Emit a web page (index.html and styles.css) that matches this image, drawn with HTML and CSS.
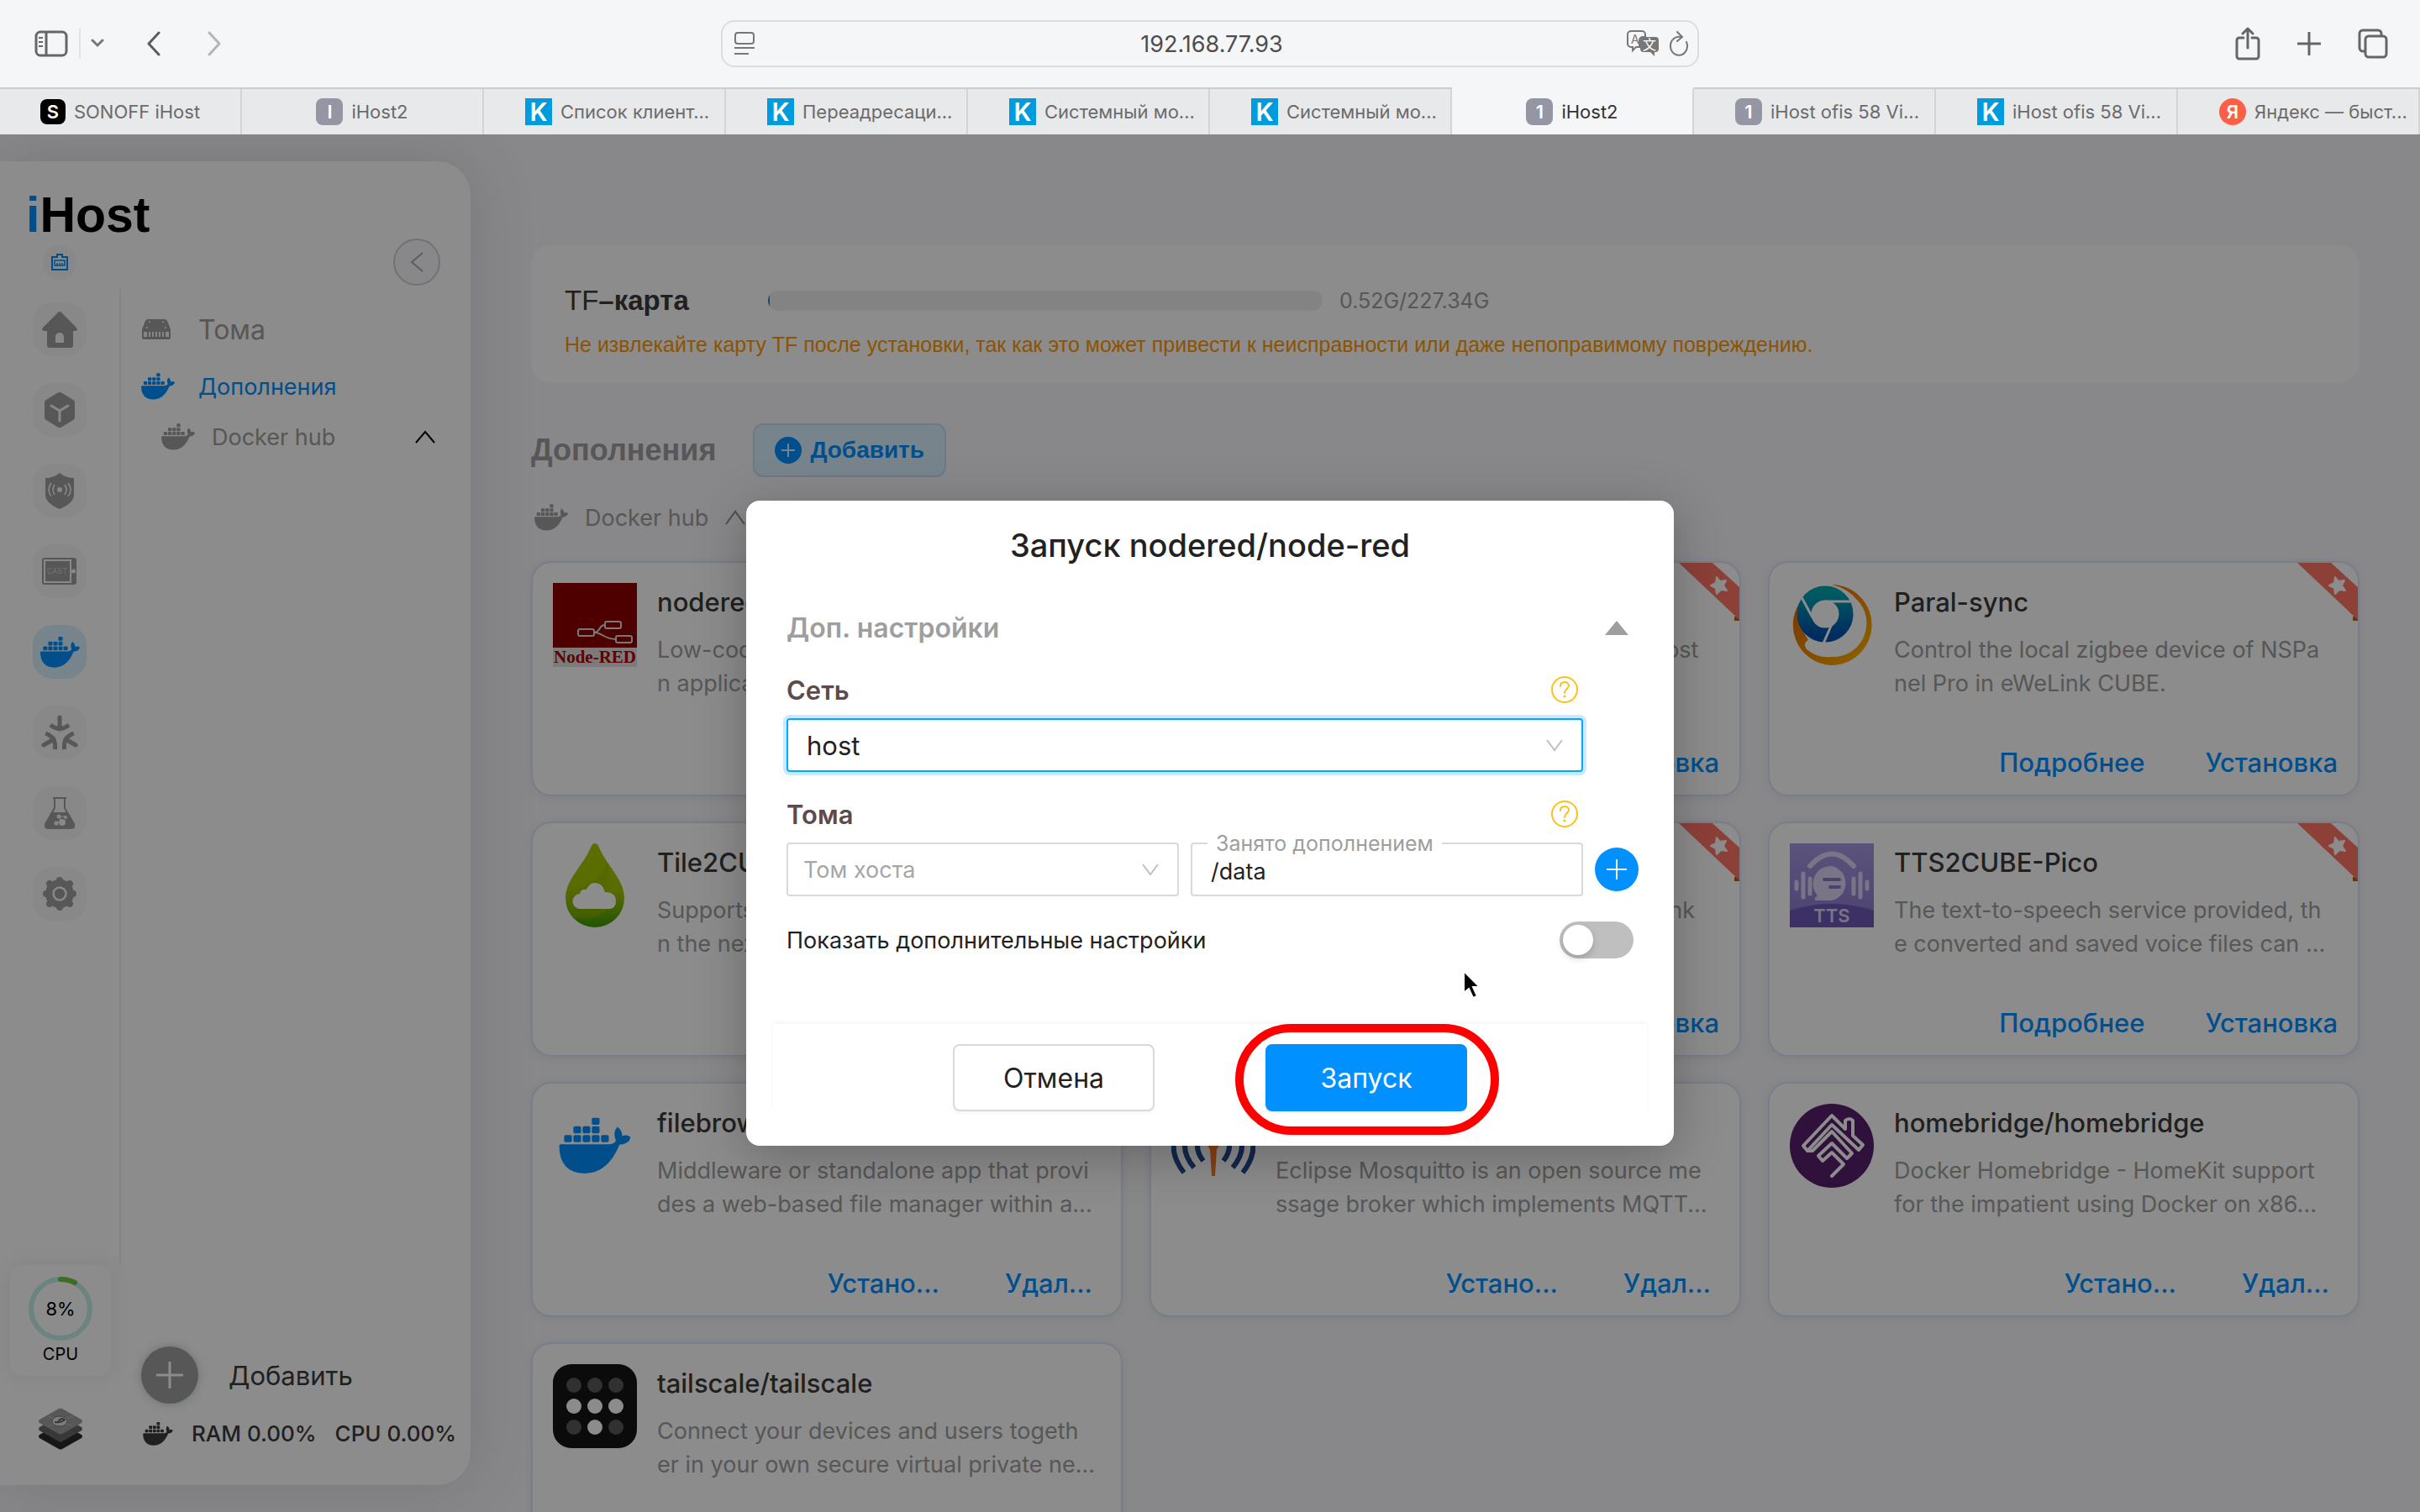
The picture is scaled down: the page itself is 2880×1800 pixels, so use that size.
FILE: index.html
```html
<!DOCTYPE html>
<html lang="ru">
<head>
    <meta charset="UTF-8">
    <meta name="viewport" content="width=device-width, initial-scale=1.0">
    <title>iHost2</title>
    <link rel="stylesheet" href="styles.css">
</head>
<body>
    <svg class="sprite" aria-hidden="true">
        <symbol id="docker" viewBox="0 0 140 110">
            <path d="M0 56Q0 52 4 52H98Q108 51 111 45Q104 28 114 18Q124 26 123 36Q132 32 140 38Q136 52 118 53Q95 109 50 109Q2 109 0 56Z"/>
            <rect x="10" y="34" width="15" height="14" rx="3"/>
            <rect x="28" y="34" width="15" height="14" rx="3"/>
            <rect x="46" y="34" width="15" height="14" rx="3"/>
            <rect x="64" y="34" width="15" height="14" rx="3"/>
            <rect x="82" y="34" width="15" height="14" rx="3"/>
            <rect x="28" y="17" width="15" height="14" rx="3"/>
            <rect x="46" y="17" width="15" height="14" rx="3"/>
            <rect x="64" y="17" width="15" height="14" rx="3"/>
            <rect x="64" y="0" width="15" height="14" rx="3"/>
        </symbol>
        <symbol id="ribbon" viewBox="0 0 72 70">
            <path d="M66 64h6v5h-6z" fill="#a86a10"/>
            <path d="M0 0H40L72 29V68Z" fill="#ff7566"/>
            <path d="M45 17l4 5 7-1-3 6 4 6-7-1-5 5-1-7-6-3 6-3z" fill="#fff" stroke="#fff" stroke-width="2" stroke-linejoin="round"/>
        </symbol>
        <symbol id="help" viewBox="0 0 32 32">
            <g fill="none" stroke="#fbc01a" stroke-width="2">
                <circle cx="16" cy="16" r="15"/>
                <path d="M11 12c0-7 10-6 10-1 0 4-5 4-5 9" stroke-linecap="round"/>
            </g>
            <circle cx="16" cy="24" r="1.6" fill="#fbc01a"/>
        </symbol>
    </svg>

    <header class="toolbar">
        <div class="tool_group">
            <button class="tool" aria-label="Боковое меню"><svg width="40" height="32" viewBox="0 0 40 32" fill="none" stroke="#666" stroke-width="3"><rect x="2" y="2" width="36" height="28" rx="5"/><path d="M14 2v28"/><path d="M5 9h5M5 14h5M5 19h5" stroke-width="2"/></svg></button>
            <span class="tool_line"></span>
            <button class="tool tool_arrow" aria-label="Группы вкладок"><svg width="16" height="12" viewBox="0 0 16 12" fill="none" stroke="#777" stroke-width="3" stroke-linecap="round"><path d="M2 2l6 6 6-6"/></svg></button>
            <button class="tool tool_back" aria-label="Назад"><svg width="18" height="30" viewBox="0 0 18 30" fill="none" stroke="#5c5c5c" stroke-width="3" stroke-linecap="round" stroke-linejoin="round"><path d="M15 2L3 15l12 13"/></svg></button>
            <button class="tool tool_forward" aria-label="Вперёд"><svg width="18" height="30" viewBox="0 0 18 30" fill="none" stroke="#b4b5b7" stroke-width="3" stroke-linecap="round" stroke-linejoin="round"><path d="M3 2l12 13L3 28"/></svg></button>
        </div>
        <div class="address">
            <svg width="24" height="30" viewBox="0 0 24 30" fill="none" stroke="#777" stroke-width="2"><rect x="1" y="2" width="22" height="13" rx="3"/><path d="M0 20h24M0 27h17"/></svg>
            <input type="text" class="address_input" value="192.168.77.93" aria-label="Адрес">
            <svg width="38" height="32" viewBox="0 0 38 32"><path d="M5 1h13a4 4 0 0 1 4 4v3h-3a4 4 0 0 0-4 4v8h-4l-4 4v-4H5a4 4 0 0 1-4-4V5a4 4 0 0 1 4-4z" fill="none" stroke="#777" stroke-width="2"/><text x="5" y="16" font-size="14" fill="#777">A</text><path d="M20 8h14a4 4 0 0 1 4 4v10a4 4 0 0 1-4 4h-1v5l-5-5h-8a4 4 0 0 1-4-4V12a4 4 0 0 1 4-4z" fill="#777"/><text x="19" y="23" font-size="16" fill="#fff">文</text></svg>
            <button class="tool tool_reload" aria-label="Обновить"><svg width="24" height="30" viewBox="0 0 24 30" fill="none" stroke="#777" stroke-width="2" stroke-linecap="round"><path d="M21 13a10 11 0 1 1-7-6"/><path d="M10 1l6 6-6 5"/></svg></button>
        </div>
        <div class="tool_group tool_group_right">
            <button class="tool" aria-label="Поделиться"><svg width="30" height="40" viewBox="0 0 30 40" fill="none" stroke="#666" stroke-width="3" stroke-linecap="round" stroke-linejoin="round"><path d="M10 13H5a3 3 0 0 0-3 3v19a3 3 0 0 0 3 3h20a3 3 0 0 0 3-3V16a3 3 0 0 0-3-3h-5M15 25V3M9 8l6-6 6 6"/></svg></button>
            <button class="tool" aria-label="Новая вкладка"><svg width="28" height="28" viewBox="0 0 28 28" stroke="#666" stroke-width="3" stroke-linecap="round"><path d="M14 1v26M1 14h26"/></svg></button>
            <button class="tool" aria-label="Все вкладки"><svg width="36" height="36" viewBox="0 0 36 36" fill="none" stroke="#666" stroke-width="3"><path d="M9 27H6a4 4 0 0 1-4-4V6a4 4 0 0 1 4-4h18a4 4 0 0 1 4 4v3"/><rect x="9" y="9" width="25" height="25" rx="4"/></svg></button>
        </div>
    </header>

    <nav class="tabs">
        <a href="#" class="tab"><span class="fav fav_sonoff">S</span>SONOFF iHost</a>
        <a href="#" class="tab"><span class="fav fav_gray">I</span>iHost2</a>
        <a href="#" class="tab tab_long"><span class="fav fav_k">K</span>Список клиент...</a>
        <a href="#" class="tab tab_long"><span class="fav fav_k">K</span>Переадресаци...</a>
        <a href="#" class="tab tab_long"><span class="fav fav_k">K</span>Системный мо...</a>
        <a href="#" class="tab tab_long"><span class="fav fav_k">K</span>Системный мо...</a>
        <a href="#" class="tab active"><span class="fav fav_gray">1</span>iHost2</a>
        <a href="#" class="tab tab_long"><span class="fav fav_gray">1</span>iHost ofis 58 Vi...</a>
        <a href="#" class="tab tab_long"><span class="fav fav_k">K</span>iHost ofis 58 Vi...</a>
        <a href="#" class="tab tab_long"><span class="fav fav_ya">Я</span>Яндекс — быст...</a>
    </nav>

    <div class="page">
        <aside class="sidebar">
            <div class="sidebar_top">
                <div class="logo"><span>i</span>Host</div>
                <div class="sidebar_tools">
                    <span class="lan"><svg width="20" height="20" viewBox="0 0 20 20" fill="none" stroke="#0090ff" stroke-width="2"><path d="M1 4h6V1h6v3h6v15H1z"/><path d="M4 8h12v6H4zM7 11v3M10 11v3M13 11v3" stroke-width="1.5"/></svg></span>
                    <button class="collapse" aria-label="Свернуть"><svg width="16" height="24" viewBox="0 0 16 24" fill="none" stroke="#a9a9a9" stroke-width="2"><path d="M15 1L2 12l13 11"/></svg></button>
                </div>
            </div>
            <div class="sidebar_body">
                <div class="rail">
                    <nav class="rail_nav">
                        <a href="#" class="rail_item" aria-label="Главная"><svg width="44" height="44" viewBox="0 0 44 44"><path d="M20 2q2-2 4 0l18 18q2 3-1 4h-3v17q0 3-3 3H10q-3 0-3-3V24H3q-3-1-1-4z"/><path d="M17 38V31a5 5 0 0 1 10 0v7z" fill="#f7f7f7"/></svg></a>
                        <a href="#" class="rail_item" aria-label="Устройства"><svg width="44" height="44" viewBox="0 0 44 44"><path d="M19 2q3-2 6 0l13 8q2 1 2 3v18q0 2-2 3l-13 8q-3 2-6 0L6 34q-2-1-2-3V13q0-2 2-3z"/><path d="M12 17l10 6 10-6M22 23v12" fill="none" stroke="#f7f7f7" stroke-width="3" stroke-linecap="round"/></svg></a>
                        <a href="#" class="rail_item" aria-label="Безопасность"><svg width="44" height="44" viewBox="0 0 44 44"><path d="M22 1q7 6 17 6v20c0 8-8 13-17 17C13 40 5 35 5 27V7q10 0 17-6z"/><circle cx="22" cy="21" r="3" fill="#f7f7f7"/><path d="M16 15q-4 6 0 12M12 13q-6 8 0 16M28 15q4 6 0 12M32 13q6 8 0 16" fill="none" stroke="#f7f7f7" stroke-width="1.6"/></svg></a>
                        <a href="#" class="rail_item" aria-label="Cast"><svg width="42" height="34" viewBox="0 0 42 34"><rect y="1" width="41" height="32" rx="3"/><rect x="3" y="4" width="31" height="26" fill="none" stroke="#f7f7f7" stroke-width="2"/><circle cx="37.500" cy="17" r="2.500" fill="#f7f7f7"/><text x="6" y="20" font-size="9" fill="#d0d0d0">CAST</text></svg></a>
                        <a href="#" class="rail_item active" aria-label="Docker"><svg width="47" height="37"><use href="#docker"/></svg></a>
                        <a href="#" class="rail_item" aria-label="Matter"><svg width="44" height="44" viewBox="0 0 44 44"><g id="arm" fill="none" stroke="#9e9e9e" stroke-width="5"><path d="M22 4v14" stroke-linecap="round"/><path d="M11 13q11 9 22 0"/></g><use href="#arm" transform="rotate(120 22 26)"/><use href="#arm" transform="rotate(240 22 26)"/></svg></a>
                        <a href="#" class="rail_item" aria-label="Лаборатория"><svg width="40" height="40" viewBox="0 0 40 40"><path d="M12 2h16M14 2v12L3 33q-1 5 3 5h28q4 0 3-5L26 14V2" fill="none" stroke="#9e9e9e" stroke-width="2"/><path d="M10 19h20l8 14q1 5-3 5H6q-4 0-3-5z"/><g fill="#f7f7f7"><circle cx="19" cy="24" r="2.500"/><circle cx="27" cy="25" r="2"/><circle cx="16" cy="32" r="2.500"/><circle cx="23" cy="31" r="4"/></g><path d="M19 24h8M19 24l4 7h-7" fill="none" stroke="#f7f7f7"/></svg></a>
                        <a href="#" class="rail_item" aria-label="Настройки"><svg width="42" height="42" viewBox="0 0 42 42"><circle cx="21" cy="21" r="17"/><g stroke="#9e9e9e" stroke-width="8" stroke-linecap="round"><path d="M21 5v32M5 21h32M9 9l24 24M33 9L9 33"/></g><circle cx="21" cy="21" r="7.500" fill="#9e9e9e" stroke="#f7f7f7" stroke-width="2.500"/></svg></a>
                    </nav>
                    <div class="cpu">
                        <div class="cpu_ring">
                            <svg width="76" height="76" viewBox="0 0 76 76" fill="none" stroke-width="6"><circle cx="38" cy="38" r="35" stroke="#c2f0e8"/><path d="M38 3a35 35 0 0 1 17 4" stroke="#6fc63c" stroke-linecap="round"/></svg>
                            <span>8%</span>
                        </div>
                        <div class="cpu_name">CPU</div>
                    </div>
                    <svg class="layers" width="54" height="50" viewBox="0 0 54 50"><path d="M2 32q-2 2 0 4l23 13q2 1 4 0l23-13q2-2 0-4L27 18z" fill="#2b2b2b"/><path d="M2 23q-2 2 0 4l23 13q2 1 4 0l23-13q2-2 0-4L27 9z" fill="#666"/><path d="M2 14q-2 2 0 4l23 13q2 1 4 0l23-13q2-2 0-4L29 1q-2-1-4 0z" fill="#9e9e9e"/><path d="M12 10l30 12M42 10L12 22" stroke="#bbb"/><ellipse cx="26" cy="16" rx="9" ry="6" fill="#e4e4e4" stroke="#777"/><path d="M20 17q8 1 12-3-5-3-8 3" fill="none" stroke="#666" stroke-width="2"/></svg>
                </div>
                <div class="menu">
                    <nav class="menu_list">
                        <a href="#" class="menu_item menu_first"><svg width="36" height="26" viewBox="0 0 36 26"><path d="M8 1h20q2 0 3 2l4 10v10q0 2-2 2H3q-2 0-2-2V13L5 3q1-2 3-2z"/><path d="M3 16h30v6H3z" fill="#f4f4f4"/><path d="M8 16v6M12 16v6M16 16v6M20 16v6M24 16v6M28 16v6" stroke="#9e9e9e" stroke-width="2"/><g fill="#fff"><circle cx="10" cy="4" r="1"/><circle cx="26" cy="4" r="1"/><circle cx="7" cy="11" r="1"/><circle cx="29" cy="11" r="1"/></g></svg>Тома</a>
                        <a href="#" class="menu_item active"><svg width="40" height="32"><use href="#docker"/></svg>Дополнения</a>
                        <a href="#" class="menu_item menu_sub"><svg width="40" height="32"><use href="#docker"/></svg>Docker hub<svg class="menu_up" width="24" height="16" viewBox="0 0 24 16"><path d="M1 15L12 2l11 13" fill="none" stroke="#000" stroke-width="2"/></svg></a>
                    </nav>
                    <button class="add_big"><span class="add_circle"><svg width="32" height="32" viewBox="0 0 32 32" stroke="#fff" stroke-width="3" stroke-linecap="round"><path d="M16 1v30M1 16h30"/></svg></span>Добавить</button>
                    <div class="usage"><svg width="36" height="28"><use href="#docker"/></svg><span>RAM 0.00%</span><span>CPU 0.00%</span></div>
                </div>
            </div>
        </aside>

        <main class="main">
            <section class="tf">
                <div class="tf_row">
                    <h2 class="tf_name"><span>TF</span>–карта</h2>
                    <div class="tf_bar"><div class="tf_used" style="width: 0.3%"></div></div>
                    <span class="tf_size">0.52G/227.34G</span>
                </div>
                <p class="tf_note">Не извлекайте карту TF после установки, так как это может привести к неисправности или даже непоправимому повреждению.</p>
            </section>

            <div class="heading">
                <h1>Дополнения</h1>
                <button class="add_small"><svg width="32" height="32" viewBox="0 0 32 32"><circle cx="16" cy="16" r="16" fill="#0090ff"/><path d="M16 8v16M8 16h16" stroke="#daf0ff" stroke-width="2"/></svg>Добавить</button>
            </div>
            <div class="hub"><svg width="40" height="32"><use href="#docker"/></svg>Docker hub<svg width="24" height="18" viewBox="0 0 24 18"><path d="M1 17L12 2l11 15" fill="none" stroke="#8c8c8c" stroke-width="2"/></svg></div>

            <div class="cards">
                <article class="card">
                    <svg class="card_icon" viewBox="0 0 100 100"><path d="M0 0h100v77H0z" fill="#f00000"/><path d="M0 0h100v77H0z" fill="#8f0000"/><path d="M0 77h100v23H0z" fill="#e0e0e0"/><g fill="none" stroke="#ddd" stroke-width="2"><rect x="30" y="55" width="19" height="8" rx="2"/><rect x="62" y="46" width="19" height="8" rx="2"/><rect x="75" y="63" width="19" height="8" rx="2"/><path d="M49 59c8 0 5-9 13-9M49 59c10 0 12 8 26 8"/></g><text x="50" y="95" text-anchor="middle" class="svg_serif" font-size="21" fill="#b00000">Node-RED</text></svg>
                    <div class="card_text">
                        <h3>nodered/node-red</h3>
                        <p>Low-code programming for event-drive<br>n applications</p>
                    </div>
                    <div class="card_links links_short"><a href="#">Устано...</a><a href="#">Удал...</a></div>
                </article>
                <article class="card">
                    <svg class="card_icon" viewBox="0 0 100 100"><circle cx="50" cy="50" r="48" fill="#0090ff"/></svg>
                    <div class="card_text">
                        <h3>eWeLink Remote</h3>
                        <p>Adds eWeLink remote control into iHost<br>in eWeLink CUBE.</p>
                    </div>
                    <svg class="ribbon"><use href="#ribbon"/></svg>
                    <div class="card_links"><a href="#">Подробнее</a><a href="#">Установка</a></div>
                </article>
                <article class="card">
                    <svg class="card_icon" viewBox="0 0 100 100">
                        <defs>
                            <linearGradient id="orange" x1="0" y1="0" x2="1" y2="1"><stop offset="0" stop-color="#e05a00"/><stop offset="1" stop-color="#ffb800"/></linearGradient>
                            <linearGradient id="teal" x1="0" y1="0" x2="0" y2="1"><stop offset="0" stop-color="#00a5b0"/><stop offset="1" stop-color="#0050b0"/></linearGradient>
                        </defs>
                        <path d="M50 2a48 48 0 1 1-1 96A48 48 0 0 1 17 17Q8 48 22 68Q15 72 20 79A40 40 0 0 0 50 88A40 40 0 0 0 80 20Q68 6 50 2z" fill="url(#orange)"/>
                        <circle cx="42" cy="37" r="25" fill="#fff" stroke="url(#teal)" stroke-width="17"/>
                        <path d="M14 17l13 24M42 22h34M50 49L40 72" stroke="#fff" stroke-width="3"/>
                    </svg>
                    <div class="card_text">
                        <h3>Paral-sync</h3>
                        <p>Control the local zigbee device of NSPa<br>nel Pro in eWeLink CUBE.</p>
                    </div>
                    <svg class="ribbon"><use href="#ribbon"/></svg>
                    <div class="card_links"><a href="#">Подробнее</a><a href="#">Установка</a></div>
                </article>

                <article class="card">
                    <svg class="card_icon" viewBox="0 0 100 100"><defs><linearGradient id="drop" x1="0" y1="0" x2="0" y2="1"><stop offset="0" stop-color="#a8c800"/><stop offset="0.600" stop-color="#a0c400"/><stop offset="1" stop-color="#3c9a00"/></linearGradient></defs><path d="M50 0q3 0 5 5c8 20 30 38 30 60a35 35 0 0 1-70 0C15 43 37 25 45 5q2-5 5-5z" fill="url(#drop)"/><path d="M16 58Q55 50 65 22Q70 48 60 56L84 60Q70 80 50 88Q30 92 22 86Z" fill="#93b500" opacity=".5"/><path d="M33 78a9 9 0 0 1-1-18q1-6 8-5 3-8 10-8 9 0 12 11 13 0 13 11 0 8-7 9z" fill="#fff"/></svg>
                    <div class="card_text">
                        <h3>Tile2CUBE</h3>
                        <p>Supports adding custom tile widgets o<br>n the next dashboard.</p>
                    </div>
                    <svg class="ribbon"><use href="#ribbon"/></svg>
                    <div class="card_links"><a href="#">Подробнее</a><a href="#">Установка</a></div>
                </article>
                <article class="card">
                    <svg class="card_icon" viewBox="0 0 100 100"><circle cx="50" cy="50" r="48" fill="#0090ff"/></svg>
                    <div class="card_text">
                        <h3>Matter Bridge</h3>
                        <p>Syncs Matter devices with the eWeLink<br>CUBE system.</p>
                    </div>
                    <svg class="ribbon"><use href="#ribbon"/></svg>
                    <div class="card_links"><a href="#">Подробнее</a><a href="#">Установка</a></div>
                </article>
                <article class="card">
                    <svg class="card_icon" viewBox="0 0 100 100"><defs><linearGradient id="tts" x1="0" y1="0" x2="0" y2="1"><stop offset="0" stop-color="#a898e0"/><stop offset="1" stop-color="#8a78d0"/></linearGradient></defs><path d="M0 0h100v100H0z" fill="url(#tts)"/><path d="M0 80Q50 64 100 80V100H0z" fill="#7058b8"/><path d="M24 27Q50-2 76 27" fill="none" stroke="#dcd5f5" stroke-width="6" stroke-linecap="round"/><path d="M50 27a21 21 0 0 1 0 41H31q-2 0-1-3l3-3A21 21 0 0 1 50 27z" fill="#dcd5f5"/><path d="M41 43h18M48 52h11" stroke="#8a78c8" stroke-width="4" stroke-linecap="round"/><path d="M8 46v8M16 36v28M24 42v18M76 42v18M84 36v28M92 46v8" stroke="#dcd5f5" stroke-width="5" stroke-linecap="round"/><text x="50" y="94" text-anchor="middle" font-size="22" font-weight="600" fill="#dcd5f5">TTS</text></svg>
                    <div class="card_text">
                        <h3>TTS2CUBE-Pico</h3>
                        <p>The text-to-speech service provided, th<br>e converted and saved voice files can ...</p>
                    </div>
                    <svg class="ribbon"><use href="#ribbon"/></svg>
                    <div class="card_links"><a href="#">Подробнее</a><a href="#">Установка</a></div>
                </article>

                <article class="card">
                    <svg class="card_icon icon_blue" viewBox="-12 -22 164 154"><use href="#docker" width="140" height="110"/></svg>
                    <div class="card_text">
                        <h3>filebrowser/filebrowser</h3>
                        <p>Middleware or standalone app that provi<br>des a web-based file manager within a...</p>
                    </div>
                    <div class="card_links links_short"><a href="#">Устано...</a><a href="#">Удал...</a></div>
                </article>
                <article class="card">
                    <svg class="card_icon" viewBox="0 0 100 100"><g fill="none" stroke="#24488c" stroke-width="6"><path d="M15 82Q-10 50 15 18M27 76Q5 50 27 24M38 68Q24 50 38 32M85 82Q110 50 85 18M73 76Q95 50 73 24M62 68Q76 50 62 32"/></g><path d="M50 40a8 8 0 0 1 4 14l-2 32h-4l-2-32a8 8 0 0 1 4-14z" fill="#f07828"/></svg>
                    <div class="card_text">
                        <h3>eclipse-mosquitto</h3>
                        <p>Eclipse Mosquitto is an open source me<br>ssage broker which implements MQTT...</p>
                    </div>
                    <div class="card_links links_short"><a href="#">Устано...</a><a href="#">Удал...</a></div>
                </article>
                <article class="card">
                    <svg class="card_icon" viewBox="0 0 100 100"><circle cx="50" cy="50" r="50" fill="#561f6e"/><path d="M21 56l-5-6 34-36 16 16V20q5-4 9 0v18l12 11-5 6-32-30-29 31h6l23-23 24 26-6 6-18-18-16 15 5 6 11-10 14 14-14 14" fill="none" stroke="#fff" stroke-width="4" stroke-linecap="round" stroke-linejoin="round"/></svg>
                    <div class="card_text">
                        <h3>homebridge/homebridge</h3>
                        <p>Docker Homebridge - HomeKit support<br>for the impatient using Docker on x86...</p>
                    </div>
                    <div class="card_links links_short"><a href="#">Устано...</a><a href="#">Удал...</a></div>
                </article>

                <article class="card">
                    <svg class="card_icon" viewBox="0 0 100 100"><rect width="100" height="100" rx="22" fill="#141417"/><g fill="#5a5a5a"><circle cx="25" cy="25" r="9"/><circle cx="50" cy="25" r="9"/><circle cx="75" cy="25" r="9"/><circle cx="25" cy="75" r="9"/><circle cx="75" cy="75" r="9"/></g><g fill="#fff"><circle cx="25" cy="50" r="9"/><circle cx="50" cy="50" r="9"/><circle cx="75" cy="50" r="9"/><circle cx="50" cy="75" r="9"/></g></svg>
                    <div class="card_text">
                        <h3>tailscale/tailscale</h3>
                        <p>Connect your devices and users togeth<br>er in your own secure virtual private ne...</p>
                    </div>
                </article>
            </div>
        </main>

        <div class="mask">
            <form class="modal" role="dialog" aria-labelledby="modal_title">
                <h2 class="modal_title" id="modal_title">Запуск nodered/node-red</h2>
                <div class="modal_body">
                    <div class="more"><span>Доп. настройки</span><svg width="28" height="17" viewBox="0 0 28 17"><path d="M14 0l14 17H0z" fill="#9e9e9e"/></svg></div>
                    <div class="label_row"><label for="net">Сеть</label><svg width="32" height="32"><use href="#help"/></svg></div>
                    <div class="select_box select_focus">
                        <select id="net"><option>host</option><option>bridge</option></select>
                        <svg width="20" height="15" viewBox="0 0 20 15"><path d="M1 1l9 12 9-12" fill="none" stroke="#bfbfbf" stroke-width="2"/></svg>
                    </div>
                    <div class="label_row"><label for="volume">Тома</label><svg width="32" height="32"><use href="#help"/></svg></div>
                    <div class="volume_row">
                        <div class="select_box select_empty">
                            <select id="volume"><option>Том хоста</option></select>
                            <svg width="20" height="15" viewBox="0 0 20 15"><path d="M1 1l9 12 9-12" fill="none" stroke="#bfbfbf" stroke-width="2"/></svg>
                        </div>
                        <div class="path_box">
                            <label for="path">Занято дополнением</label>
                            <input type="text" id="path" value="/data">
                        </div>
                        <button type="button" class="plus" aria-label="Добавить том"><svg width="24" height="24" viewBox="0 0 24 24" stroke="#fff" stroke-width="2"><path d="M12 0v24M0 12h24"/></svg></button>
                    </div>
                    <div class="switch_row">
                        <label for="extra">Показать дополнительные настройки</label>
                        <input type="checkbox" id="extra" class="switch">
                    </div>
                </div>
                <div class="modal_buttons">
                    <button type="button" class="button_modal">Отмена</button>
                    <button type="button" class="button_modal button_start">Запуск<span class="ring"></span></button>
                </div>
                <svg class="cursor" width="24" height="36" viewBox="0 0 24 36"><path d="M2 2v26l6-5 5 11 5-2-5-11h8z" fill="#000" stroke="#fff" stroke-width="2"/></svg>
            </form>
        </div>
    </div>
</body>
</html>
```

FILE: styles.css
```css
*
{
    box-sizing: border-box;
}
body
{
    margin: 0;
    height: 100vh;
    display: flex;
    flex-direction: column;
    overflow: hidden;
    font-family: Inter, "Noto Sans", "Noto Sans CJK SC", sans-serif;
    font-size: 27px;
    color: #3b3b3b;
}
h1, h2, h3, p
{
    margin: 0;
}
a
{
    color: inherit;
    text-decoration: none;
}
button, input, select
{
    font: inherit;
    color: inherit;
}
button
{
    padding: 0;
    border: none;
    background: none;
}
svg
{
    flex: none;
    display: block;
}
.sprite
{
    position: absolute;
    width: 0;
    height: 0;
}
/* browser bar */
.toolbar
{
    height: 104px;
    flex: none;
    display: grid;
    grid-template-columns: 1fr 1164px 1fr;
    align-items: center;
    background-color: #f5f6f8;
}
.tool_group
{
    display: flex;
    align-items: center;
    padding-left: 41px;
}
.tool_group_right
{
    justify-content: flex-end;
    gap: 44px;
    padding: 0 38px 0 0;
}
.tool_line
{
    width: 2px;
    height: 36px;
    margin: 0 12px 0 13px;
    background-color: #e2e3e5;
}
.tool_back
{
    margin-left: 50px;
}
.tool_forward
{
    margin-left: 54px;
}
.tool_reload
{
    margin-left: 12px;
}
.address
{
    height: 56px;
    display: flex;
    align-items: center;
    padding: 0 10px 0 14px;
    border: 2px solid #dcdddf;
    border-radius: 16px;
}
.address_input
{
    flex: 1;
    min-width: 0;
    padding: 0 0 0 50px;
    border: none;
    background: none;
    text-align: center;
    font-size: 27px;
    color: #4d4d4d;
}
.tabs
{
    height: 56px;
    flex: none;
    display: grid;
    grid-template-columns: repeat(10, minmax(0, 1fr));
}
.tab
{
    display: flex;
    align-items: center;
    justify-content: center;
    gap: 10px;
    border-right: 2px solid #d3d4d6;
    border-top: 2px solid #cbccce;
    background-color: #e8e9eb;
    font-size: 22px;
    color: #6b6b6b;
    white-space: nowrap;
    overflow: hidden;
}
.tab_long
{
    justify-content: flex-start;
    padding-left: 49px;
}
.tab.active
{
    border-top-color: #f5f6f8;
    background-color: #f5f6f8;
    color: #333;
}
.fav
{
    flex: none;
    width: 32px;
    height: 32px;
    line-height: 32px;
    text-align: center;
    font-weight: 600;
    color: #fff;
}
.fav_sonoff
{
    width: 30px;
    height: 30px;
    line-height: 30px;
    border-radius: 8px;
    background-color: #000;
}
.fav_gray
{
    border-radius: 8px;
    background-color: #9596a4;
}
.fav_k
{
    background-color: #009bdf;
    font-size: 30px;
}
.fav_ya
{
    border-radius: 50%;
    background-color: #fc5f45;
}
/* page */
.page
{
    flex: 1;
    min-height: 0;
    position: relative;
    display: flex;
    overflow: hidden;
    background-color: #f7f7fb;
}
.sidebar
{
    width: 560px;
    flex: none;
    margin: 32px 0;
    display: flex;
    flex-direction: column;
    border-radius: 0 40px 40px 0;
    background-color: #fff;
    box-shadow: 0 0 80px rgba(60, 70, 90, 0.16);
}
.sidebar_top
{
    height: 152px;
    padding: 28px 36px 0 31px;
}
.logo
{
    height: 64px;
    line-height: 72px;
    font-family: "Liberation Sans", sans-serif;
    font-size: 59px;
    font-weight: bold;
    color: #000;
}
.logo span
{
    color: #0090ff;
}
.sidebar_tools
{
    display: flex;
    align-items: center;
    justify-content: space-between;
    padding-left: 20px;
}
.lan
{
    width: 40px;
    height: 40px;
    display: flex;
    align-items: center;
    justify-content: center;
    border-radius: 50%;
    background-color: #f7f7f7;
}
.collapse
{
    width: 56px;
    height: 56px;
    display: flex;
    align-items: center;
    justify-content: center;
    border: 2px solid #d0d0d0;
    border-radius: 50%;
    background-color: #f7f7fb;
}
.sidebar_body
{
    flex: 1;
    display: flex;
}
.rail
{
    width: 144px;
    display: flex;
    flex-direction: column;
    align-items: center;
    padding-bottom: 42px;
}
.rail_nav
{
    width: 144px;
    flex: 1;
    display: flex;
    flex-direction: column;
    align-items: center;
    gap: 32px;
    padding-top: 16px;
    border-right: 2px solid #efefef;
}
.rail_item
{
    width: 64px;
    height: 64px;
    display: flex;
    align-items: center;
    justify-content: center;
    border-radius: 24px;
    background-color: #f7f7f7;
    fill: #9e9e9e;
}
.rail_item.active
{
    background-color: #daf0ff;
    fill: #0090ff;
}
.cpu
{
    width: 120px;
    height: 132px;
    padding-top: 14px;
    border-radius: 16px;
    text-align: center;
    font-size: 22px;
    color: #000;
    box-shadow: 0 0 24px rgba(0, 0, 0, 0.08);
}
.cpu_ring
{
    display: grid;
    place-items: center;
}
.cpu_ring > *
{
    grid-area: 1 / 1;
}
.cpu_name
{
    font-size: 20px;
    line-height: 32px;
}
.layers
{
    margin-top: 38px;
}
.menu
{
    flex: 1;
    display: flex;
    flex-direction: column;
    padding-bottom: 46px;
}
.menu_list
{
    flex: 1;
    padding-top: 14px;
}
.menu_item
{
    height: 60px;
    display: flex;
    align-items: center;
    gap: 28px;
    padding-left: 24px;
    color: #9e9e9e;
    fill: #9e9e9e;
}
.menu_first
{
    height: 68px;
    gap: 32px;
    margin-bottom: 4px;
    font-size: 32px;
}
.menu_item.active
{
    color: #0090ff;
    fill: #0090ff;
}
.menu_sub
{
    gap: 20px;
    padding: 0 42px 0 48px;
}
.menu_up
{
    margin-left: auto;
}
.add_big
{
    display: flex;
    align-items: center;
    gap: 36px;
    padding-left: 24px;
    font-size: 31px;
}
.add_circle
{
    width: 68px;
    height: 68px;
    display: flex;
    align-items: center;
    justify-content: center;
    border-radius: 50%;
    background-color: #9e9e9e;
    box-shadow: 0 0 12px rgba(60, 80, 110, 0.3);
}
.usage
{
    display: flex;
    align-items: center;
    gap: 22px;
    margin-top: 20px;
    padding-left: 26px;
    font-size: 26px;
    font-weight: 500;
    white-space: nowrap;
    fill: #3b3b3b;
}
.main
{
    flex: 1;
    min-width: 0;
    padding: 132px 72px 0;
}
.tf
{
    height: 164px;
    padding: 46px 38px 0 40px;
    border-radius: 24px;
    background-color: #fff;
    font-family: "Liberation Sans", sans-serif;
}
.tf_row
{
    height: 40px;
    display: flex;
    align-items: center;
}
.tf_name
{
    width: 242px;
    font-size: 33px;
}
.tf_name span
{
    font-weight: normal;
}
.tf_bar
{
    width: 660px;
    height: 24px;
    overflow: hidden;
    border-radius: 12px;
    background-color: #efefef;
}
.tf_used
{
    height: 24px;
    background-color: #0090ff;
}
.tf_size
{
    margin-left: 20px;
    font-family: Inter, sans-serif;
    font-size: 25px;
    color: #9e9e9e;
}
.tf_note
{
    margin-top: 16px;
    line-height: 32px;
    font-size: 25px;
    color: #ff9900;
    white-space: nowrap;
}
.heading
{
    display: flex;
    align-items: center;
    gap: 44px;
    margin-top: 48px;
    font-family: "Liberation Sans", sans-serif;
}
.heading h1
{
    font-size: 36px;
    color: #9e9e9e;
}
.add_small
{
    height: 64px;
    display: flex;
    align-items: center;
    gap: 10px;
    padding: 0 24px;
    border: 2px solid #c5dcf5;
    border-radius: 12px;
    background-color: #daf0ff;
    font-size: 28px;
    font-weight: bold;
    color: #0090ff;
}
.hub
{
    height: 100px;
    display: flex;
    align-items: center;
    gap: 20px;
    padding: 0 0 4px 4px;
    color: #9e9e9e;
    fill: #9e9e9e;
}
.cards
{
    display: grid;
    grid-template-columns: repeat(3, minmax(0, 1fr));
    gap: 30px 32px;
}
.card
{
    height: 280px;
    position: relative;
    display: grid;
    grid-template-columns: 100px minmax(0, 1fr);
    grid-template-rows: 1fr 28px;
    column-gap: 24px;
    padding: 24px;
    overflow: hidden;
    border: 2px solid #d9e4fa;
    border-radius: 24px;
    background-color: #fff;
    box-shadow: 0 2px 12px rgba(0, 0, 0, 0.06);
}
.card_icon
{
    width: 100px;
    height: 100px;
}
.icon_blue
{
    fill: #0090ff;
}
.card h3
{
    line-height: 46px;
    font-size: 31px;
    font-weight: 500;
}
.card p
{
    margin-top: 14px;
    line-height: 40px;
    color: #9e9e9e;
    white-space: nowrap;
}
.card_links
{
    grid-column: 1 / 3;
    display: flex;
    justify-content: flex-end;
    gap: 72px;
    line-height: 28px;
    font-size: 31px;
    font-weight: 500;
    color: #0090ff;
}
.links_short
{
    gap: 78px;
    padding-right: 10px;
}
.ribbon
{
    width: 72px;
    height: 70px;
    position: absolute;
    top: 0;
    right: 0;
}
.svg_serif
{
    font-family: "Liberation Serif", serif;
    font-weight: bold;
}
/* modal */
.mask
{
    position: absolute;
    inset: 0;
    display: flex;
    align-items: center;
    justify-content: center;
    background-color: rgba(0, 0, 0, 0.45);
}
.modal
{
    width: 1104px;
    position: relative;
    padding: 29px 32px 41px;
    border-radius: 16px;
    background-color: #fff;
    color: #222;
    box-shadow: 0 12px 60px rgba(0, 0, 0, 0.25);
}
.modal_title
{
    line-height: 48px;
    text-align: center;
    font-size: 38px;
    font-weight: 500;
}
.modal_body
{
    height: 546px;
    padding: 50px 16px 0;
}
.more, .label_row, .switch_row
{
    display: flex;
    align-items: center;
    justify-content: space-between;
}
.more
{
    height: 48px;
    padding-right: 6px;
    font-size: 32px;
    font-weight: 600;
    color: #9e9e9e;
}
.label_row
{
    height: 48px;
    margin-top: 26px;
    padding-right: 66px;
    font-size: 31px;
    font-weight: 600;
    color: #5d4b4b;
}
.select_box
{
    height: 64px;
    position: relative;
    flex: 1;
    display: flex;
    align-items: center;
    border: 2px solid #d9d9d9;
    border-radius: 4px;
}
.select_box select
{
    width: 100%;
    height: 60px;
    padding: 0 18px;
    appearance: none;
    border: none;
    outline: none;
    background: none;
}
.select_box svg
{
    position: absolute;
    right: 22px;
    pointer-events: none;
}
.select_focus
{
    margin: 10px 60px 0 0;
    border-color: #00a8ff;
    box-shadow: 0 0 0 4px #cceaff;
    font-size: 31px;
}
.select_focus select
{
    padding: 0 22px;
}
.select_empty
{
    color: #a6a6a6;
}
.volume_row
{
    display: flex;
    align-items: center;
    gap: 14px;
    margin: 10px -6px 0 0;
}
.path_box
{
    height: 64px;
    flex: 1;
    position: relative;
    border: 2px solid #d9d9d9;
    border-radius: 4px;
}
.path_box label
{
    position: absolute;
    top: -17px;
    left: 18px;
    padding: 0 10px;
    line-height: 32px;
    background-color: #fff;
    font-size: 25px;
    color: #9e9e9e;
    white-space: nowrap;
}
.path_box input
{
    width: 100%;
    height: 60px;
    padding: 4px 22px 0;
    border: none;
    outline: none;
    background: none;
}
.plus
{
    width: 52px;
    height: 52px;
    display: flex;
    align-items: center;
    justify-content: center;
    border-radius: 50%;
    background-color: #0090ff;
}
.switch_row
{
    height: 44px;
    margin-top: 30px;
}
.switch
{
    width: 88px;
    height: 44px;
    margin: 0;
    padding: 4px;
    appearance: none;
    border-radius: 22px;
    background-color: #bfbfbf;
}
.switch::before
{
    content: "";
    display: block;
    width: 36px;
    height: 36px;
    border-radius: 50%;
    background-color: #fff;
    box-shadow: 0 4px 8px rgba(0, 35, 11, 0.2);
}
.switch:checked
{
    background-color: #0090ff;
}
.switch:checked::before
{
    margin-left: auto;
}
.modal_buttons
{
    display: flex;
    justify-content: center;
    gap: 132px;
    padding-top: 24px;
    box-shadow: 0 -2px 6px rgba(0, 0, 0, 0.05);
}
.button_modal
{
    width: 240px;
    height: 80px;
    position: relative;
    border: 2px solid #d9d9d9;
    border-radius: 8px;
    background-color: #fff;
    font-size: 32px;
    box-shadow: 0 4px 0 rgba(0, 0, 0, 0.02);
}
.button_start
{
    border-color: #0090ff;
    background-color: #0090ff;
    color: #fff;
}
.ring
{
    position: absolute;
    inset: -26px -40px -30px -38px;
    border: 10px solid #f00;
    border-radius: 66px;
}
.cursor
{
    position: absolute;
    top: 558px;
    left: 852px;
}
```
